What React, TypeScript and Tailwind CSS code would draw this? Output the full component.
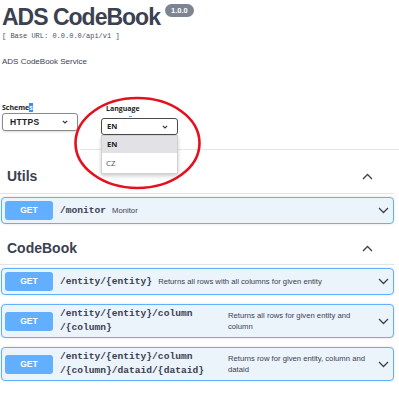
import React from 'react';

type OpProps = {
  path: string[];
  desc: string[];
  multi?: boolean;
};

function Chevron({ up = false }: { up?: boolean }) {
  return (
    <svg width="11" height="7" viewBox="0 0 11 7" className="flex-none">
      <path
        d={up ? 'M1 6L5.5 1.5L10 6' : 'M1 1L5.5 5.5L10 1'}
        fill="none"
        stroke="#3b4151"
        strokeWidth="1.3"
      />
    </svg>
  );
}

function SmallChevron() {
  return (
    <svg width="6" height="4" viewBox="0 0 6 4" className="flex-none">
      <path d="M0.8 0.8L3 3L5.2 0.8" fill="none" stroke="#333" strokeWidth="1.1" />
    </svg>
  );
}

function Op({ path, desc, multi }: OpProps) {
  return (
    <div
      className={`ml-[1px] w-[393px] flex items-center border border-[#61affe] rounded-[4px] bg-[#ebf3fb] shadow-[0_0_3px_rgba(0,0,0,0.12)] pl-[3px] pr-[4px] ${
        multi ? 'h-[34px]' : 'h-[27px]'
      }`}
    >
      <div className="w-[48px] h-[19px] flex-none flex items-center justify-center bg-[#61affe] rounded-[3px] text-white font-bold text-[8.5px]">
        GET
      </div>
      <div
        className={`ml-[7px] flex-none font-['Liberation_Mono',monospace] font-bold text-[9.6px] leading-[14px] text-[#3b4151] ${
          multi ? 'w-[162px]' : ''
        }`}
      >
        {path.map((p) => (
          <div key={p}>{p}</div>
        ))}
      </div>
      <div className="ml-[6px] text-[7.7px] leading-[11px] text-[#3b4151]">
        {desc.map((d) => (
          <div key={d}>{d}</div>
        ))}
      </div>
      <div className="ml-auto">
        <Chevron />
      </div>
    </div>
  );
}

function Heading({ title, className = '' }: { title: string; className?: string }) {
  return (
    <div
      className={`w-[394px] flex items-center justify-between pl-[7px] pr-[21px] border-b border-[#e2e3e5] ${className}`}
    >
      <span className="text-[14px] font-bold text-[#3b4151]">{title}</span>
      <Chevron up />
    </div>
  );
}

export default function App() {
  return (
    <div className="relative w-[399px] h-[400px] overflow-hidden bg-white font-['Liberation_Sans',Arial,sans-serif] text-[#3b4151]">
      {/* Info */}
      <div className="pt-[4px] pl-[2px] flex items-start">
        <h1 className="text-[23px] leading-[26px] font-bold tracking-[-1px]">ADS CodeBook</h1>
        <span className="ml-[5px] h-[13px] w-[29px] rounded-full bg-[#7d8492] text-white text-[7.5px] font-bold leading-[13px] text-center">
          1.0.0
        </span>
      </div>
      <div className="mt-[1px] pl-[2px] font-['Liberation_Mono',monospace] text-[7px] leading-[10px] text-[#4a4f5c]">
        [ Base URL: 0.0.0.0/api/v1 ]
      </div>
      <div className="mt-[15px] pl-[2px] text-[8px] leading-[11px]">ADS CodeBook Service</div>

      {/* Schemes / language */}
      <div className="mt-[36px] pl-[2px] flex items-start font-['Open_Sans',sans-serif] text-[#222]">
        <div className="w-[76px]">
          <div className="text-[7px] leading-[10px] font-bold">
            Scheme<span className="bg-[#3390ff] text-white">s</span>
          </div>
          <div className="h-[18px] border border-[#8a8a8a] rounded-[3px] flex items-center justify-between pl-[7px] pr-[9px] shadow-[0_1px_2px_rgba(0,0,0,0.15)]">
            <span className="text-[8.5px] font-bold font-['Liberation_Sans',sans-serif] tracking-[0.3px]">HTTPS</span>
            <SmallChevron />
          </div>
        </div>
        <div className="ml-[23px] w-[77px] mt-[1px]">
          <div className="pl-[5px] text-[7px] leading-[10px] font-bold">Language</div>
          <div className="mt-[2px] ml-[28px] h-[1px] w-[3px] bg-[#5b9bff]" />
          <div className="relative mt-[1px]">
            <div className="h-[17px] border-[1.5px] border-[#4a4a4a] rounded-[3px] flex items-center justify-between pl-[5px] pr-[9px]">
              <span className="text-[7.5px] font-bold">EN</span>
              <SmallChevron />
            </div>
            <div className="absolute top-full left-0 w-[77px] bg-white border border-[#d0d0d0] shadow-[0_2px_4px_rgba(0,0,0,0.2)]">
              <div className="h-[17px] bg-[#e1e1e6] flex items-center pl-[5px] text-[7.5px] font-bold">EN</div>
              <div className="h-[20px] flex items-center pl-[4px] text-[8px] text-[#555]">CZ</div>
            </div>
          </div>
        </div>
      </div>
      <div className="mt-[14px] ml-[80px] h-px bg-[#e6e6e6]" />

      {/* Utils */}
      <Heading title="Utils" className="mt-[10px] h-[34px]" />
      <div className="mt-[3px]">
        <Op path={['/monitor']} desc={['Monitor']} />
      </div>

      {/* CodeBook */}
      <Heading title="CodeBook" className="mt-[8px] h-[33px]" />
      <div className="mt-[3px] flex flex-col gap-[9px]">
        <Op path={['/entity/{entity}']} desc={['Returns all rows with all columns for given entity']} />
        <Op
          multi
          path={['/entity/{entity}/column', '/{column}']}
          desc={['Returns all rows for given entity and', 'column']}
        />
        <Op
          multi
          path={['/entity/{entity}/column', '/{column}/dataid/{dataid}']}
          desc={['Returns row for given entity, column and', 'dataid']}
        />
      </div>

      {/* annotation */}
      <svg className="absolute inset-0 pointer-events-none" width="399" height="400">
        <ellipse cx="137.5" cy="143" rx="62" ry="45" fill="none" stroke="#e5101c" strokeWidth="2.6" />
      </svg>
    </div>
  );
}
